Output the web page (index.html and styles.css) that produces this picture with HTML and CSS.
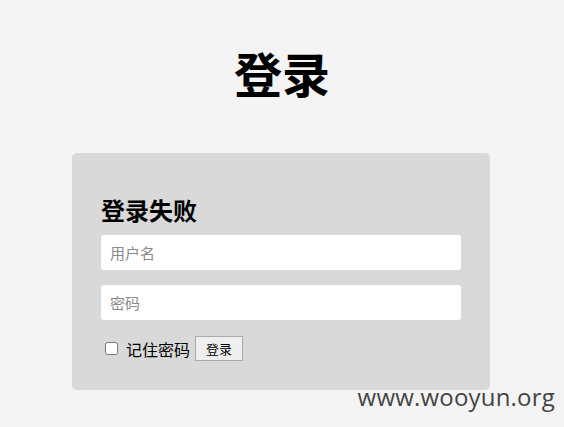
FILE: index.html
```html
<!DOCTYPE html>
<html lang="zh">
<head>
<meta charset="utf-8">
<link rel="stylesheet" href="styles.css">
</head>
<body>
<h1 class="title">登录</h1>
<form class="card">
  <h2 class="card-title">登录失败</h2>
  <input class="field" type="text" placeholder="用户名">
  <input class="field" type="password" placeholder="密码">
  <div class="row">
    <label class="remember"><input class="check" type="checkbox">记住密码</label>
    <button class="btn" type="button">登录</button>
  </div>
</form>
<div class="watermark">www.wooyun.org</div>
</body>
</html>
```
FILE: styles.css
```css
html, body {
  margin: 0;
  padding: 0;
}
body {
  background: #f4f4f4;
  font-family: "Noto Sans CJK SC", "Noto Sans", sans-serif;
  color: #000;
  height: 427px;
  position: relative;
  overflow: hidden;
}
.title {
  margin: 37px 0 0;
  height: 70px;
  line-height: 70px;
  font-size: 48px;
  font-weight: 700;
  text-align: center;
}
.card {
  box-sizing: border-box;
  width: 418px;
  margin: 46px 0 0 72px;
  padding: 42px 29px 29px;
  background: #d9d9d9;
  border-radius: 5px;
  display: flex;
  flex-direction: column;
}
.card-title {
  margin: 0 0 10px;
  font-size: 24px;
  line-height: 30px;
  font-weight: 700;
}
.field {
  box-sizing: border-box;
  width: 360px;
  height: 35px;
  border: none;
  border-radius: 3px;
  background: #fff;
  padding: 0 9px;
  font-family: "Noto Sans CJK SC", sans-serif;
  font-size: 15px;
  margin: 0 0 15px;
  outline: none;
}
.field::placeholder {
  color: #8a8a8a;
}
.row {
  display: flex;
  align-items: center;
  margin-top: 1px;
  height: 25px;
}
.remember {
  display: flex;
  align-items: center;
  font-size: 16px;
  line-height: 20px;
}
.check {
  width: 13px;
  height: 13px;
  margin: 0 8px 0 4px;
}
.btn {
  margin-left: 5px;
  width: 48px;
  height: 25px;
  border: 1px solid #aaa;
  background: #efefef;
  border-radius: 0;
  font-family: "Noto Sans CJK SC", sans-serif;
  font-size: 13px;
  padding: 0;
  color: #000;
}
.watermark {
  position: absolute;
  right: 9px;
  top: 380px;
  font-family: "Open Sans", sans-serif;
  font-size: 24px;
  color: #444;
  letter-spacing: 0.2px;
}
```
